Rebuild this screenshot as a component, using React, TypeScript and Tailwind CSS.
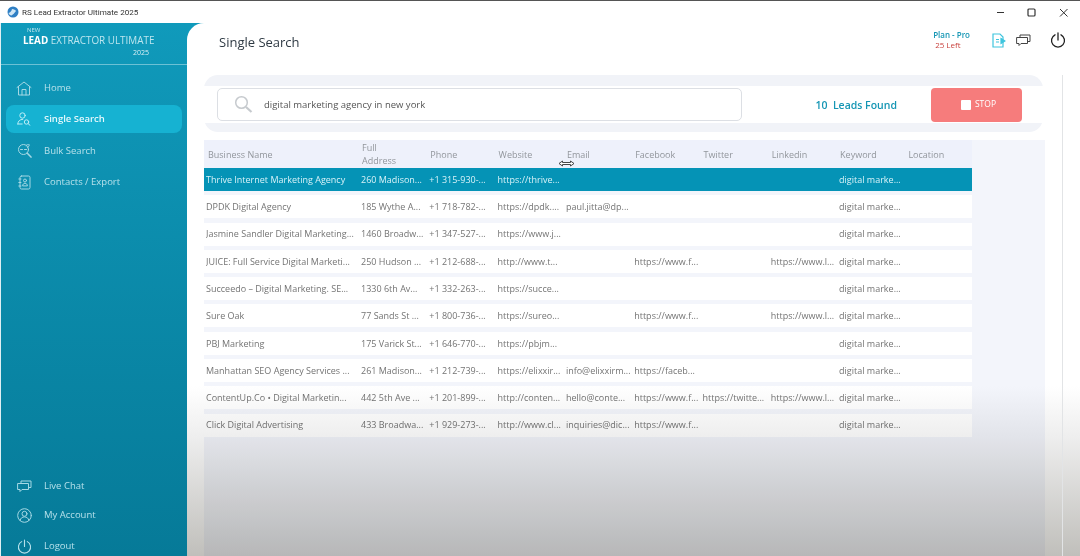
import React from "react";

const font = { fontFamily: '"Open Sans", "Noto Sans", sans-serif' };

const rows: string[][] = [
  ["Thrive Internet Marketing Agency", "260 Madison...", "+1 315-930-...", "https://thrive...", "", "", "", "", "digital marke..."],
  ["DPDK Digital Agency", "185 Wythe A...", "+1 718-782-...", "https://dpdk....", "paul.jitta@dp...", "", "", "", "digital marke..."],
  ["Jasmine Sandler Digital Marketing...", "1460 Broadw...", "+1 347-527-...", "https://www.j...", "", "", "", "", "digital marke..."],
  ["JUICE: Full Service Digital Marketi...", "250 Hudson ...", "+1 212-688-...", "http://www.t...", "", "https://www.f...", "", "https://www.l...", "digital marke..."],
  ["Succeedo – Digital Marketing. SE...", "1330 6th Av...", "+1 332-263-...", "https://succe...", "", "", "", "", "digital marke..."],
  ["Sure Oak", "77 Sands St ...", "+1 800-736-...", "https://sureo...", "", "https://www.f...", "", "https://www.l...", "digital marke..."],
  ["PBJ Marketing", "175 Varick St...", "+1 646-770-...", "https://pbjm...", "", "", "", "", "digital marke..."],
  ["Manhattan SEO Agency Services ...", "261 Madison...", "+1 212-739-...", "https://elixxir...", "info@elixxirm...", "https://faceb...", "", "", "digital marke..."],
  ["ContentUp.Co • Digital Marketin...", "442 5th Ave ...", "+1 201-899-...", "http://conten...", "hello@conte...", "https://www.f...", "https://twitte...", "https://www.l...", "digital marke..."],
  ["Click Digital Advertising", "433 Broadwa...", "+1 929-273-...", "http://www.cl...", "inquiries@dic...", "https://www.f...", "", "", "digital marke..."],
];

const headers = ["Business Name", "Full Address", "Phone", "Website", "Email", "Facebook", "Twitter", "Linkedin", "Keyword", "Location"];

function NavItem({ icon, label, active, className = "" }: { icon: React.ReactNode; label: string; active?: boolean; className?: string }) {
  return (
    <div className={`mx-[5px] flex h-[28px] shrink-0 items-center gap-[12px] rounded-[8px] pl-[10px] text-[9.5px] ${active ? "bg-[#16b2d2] font-semibold text-[#e4f8fc]" : "text-[#b5e0ea]"} ${className}`}>
      <span className="flex w-[16px] justify-center">{icon}</span>
      <span>{label}</span>
    </div>
  );
}

const ic = { fill: "none", stroke: "currentColor", strokeWidth: 1, strokeLinecap: "round" as const, strokeLinejoin: "round" as const };

const HomeIcon = () => (
  <svg width="16" height="15" viewBox="0 0 16 15" {...ic} className="text-[#a5d8e4]">
    <path d="M1 6.500 8 1l7 5.500" /><path d="M2.500 5.500V14h11V5.500" /><path d="M6 14V8.500h4V14" />
  </svg>
);
const UserSearchIcon = () => (
  <svg width="14" height="14" viewBox="0 0 14 14" {...ic} className="text-[#bdeef8]">
    <circle cx="5.500" cy="3.500" r="2.700" /><path d="M.8 12c0-2.800 2-4.700 5-4.700" /><path d="M.8 12h4.400" /><circle cx="9.500" cy="10" r="2.200" /><path d="m11.200 11.700 1.800 1.600" />
  </svg>
);
const BulkIcon = () => (
  <svg width="15" height="15" viewBox="0 0 15 15" {...ic} className="text-[#a5d8e4]">
    <circle cx="6.500" cy="6.500" r="5" /><path d="m10.300 10.300 3.700 3.800" strokeWidth="1.500" /><path d="M3.500 6.500h2M7.500 6.500h2" /><path d="M9 2.500c1-1 2.500-1 3.300-.8-.1 1-.5 2-1.800 2.800" />
  </svg>
);
const ContactsIcon = () => (
  <svg width="13" height="15" viewBox="0 0 13 15" {...ic} className="text-[#a5d8e4]">
    <rect x="2" y="1" width="10" height="13" rx="1.500" /><path d="M.8 4h2.200M.8 7.500h2.200M.8 11h2.200" /><circle cx="7" cy="5.500" r="1.500" /><path d="M4.600 10.500c0-3 4.800-3 4.800 0z" />
  </svg>
);
const ChatIcon = ({ className }: { className: string }) => (
  <svg width="15" height="13" viewBox="0 0 15 13" {...ic} className={className}>
    <path d="M4 3V1h10v6.500h-2" /><path d="M1 3.500h10.500v6H5l-2 2v-2H1z" />
  </svg>
);
const AccountIcon = () => (
  <svg width="15" height="15" viewBox="0 0 15 15" {...ic} className="text-[#a5d8e4]">
    <circle cx="7.500" cy="7.500" r="6.800" /><circle cx="7.500" cy="5.800" r="2.500" /><path d="M3 12.500c.6-2.600 2.400-3.600 4.500-3.600s3.900 1 4.500 3.600" />
  </svg>
);
const PowerIcon = ({ size, className, sw }: { size: number; className: string; sw: number }) => (
  <svg width={size} height={size} viewBox="0 0 16 16" fill="none" stroke="currentColor" strokeWidth={sw} strokeLinecap="round" className={className}>
    <path d="M5 2.800a6.500 6.500 0 1 0 6 0" /><path d="M8 1v7" />
  </svg>
);

export default function App() {
  return (
    <div style={font} className="flex h-[556px] w-[1080px] flex-col overflow-hidden border-t border-[#555] bg-white">
      <div className="flex h-[22px] shrink-0 items-center bg-white text-[#333]">
        <svg width="12" height="12" viewBox="0 0 12 12" className="ml-[7px]">
          <circle cx="6" cy="6" r="5.500" fill="#2f7fc4" />
          <path d="M1.500 7c2-.4 3-2 3.500-4 2 0 3.500 1 4 2-1.500 2-3 3.500-4.500 4.500C3 9.500 2 8.500 1.500 7z" fill="#cfe6f5" />
        </svg>
        <span className="ml-[3px] font-['Roboto'] text-[8.100px]">RS Lead Extractor Ultimate 2025</span>
        <div className="ml-auto flex items-center gap-[22px] pr-[11px] text-[#333]">
          <svg width="9" height="9" viewBox="0 0 9 9" stroke="currentColor" fill="none"><path d="M1 4.500h7" /></svg>
          <svg width="9" height="9" viewBox="0 0 9 9" stroke="currentColor" fill="none"><rect x="1" y="1" width="7" height="7" rx="1" strokeWidth="1.200" /></svg>
          <svg width="11" height="11" viewBox="0 0 11 11" stroke="currentColor" fill="none"><path d="m2 2 7.500 7.500M9.500 2 2 9.500" /></svg>
        </div>
      </div>

      <div className="flex min-h-0 flex-1">
        <aside className="flex w-[187px] shrink-0 flex-col overflow-hidden border-l border-[#dfeff3] bg-gradient-to-b from-[#109abb] to-[#067a98]">
          <div className="h-[42px] shrink-0 border-b border-[#6cc1d5] pl-[22px] text-[#d8eff5]">
            <div className="pl-[4px] pt-[4px] text-[6px] leading-[6px] text-[#bfe5ee]">NEW</div>
            <div className="text-[9.900px] leading-[14px] whitespace-nowrap text-[#bde6ef]">
              <span className="font-bold text-white">LEAD</span> EXTRACTOR ULTIMATE
            </div>
            <div className="pl-[110px] pt-[1px] text-[7px] leading-[9px]">2025</div>
          </div>
          <div className="flex flex-col gap-[3.400px] pt-[9px]">
            <NavItem icon={<HomeIcon />} label="Home" />
            <NavItem icon={<UserSearchIcon />} label="Single Search" active />
            <NavItem icon={<BulkIcon />} label="Bulk Search" />
            <NavItem icon={<ContactsIcon />} label="Contacts / Export" />
          </div>
          <div className="mb-[-4px] mt-auto flex flex-col gap-[1px]">
            <NavItem icon={<ChatIcon className="text-[#a5d8e4]" />} label="Live Chat" />
            <NavItem icon={<AccountIcon />} label="My Account" />
            <NavItem icon={<PowerIcon size={15} sw={1.200} className="text-[#b5e0ea]" />} label="Logout" className="mt-[2px]" />
          </div>
        </aside>

        <div className="min-w-0 flex-1 bg-[#109abb]">
          <main className="relative flex h-full flex-col rounded-tl-[17px] bg-white pl-[17px]">
            <header className="flex h-[52px] shrink-0 items-center pb-[14px]">
              <h1 className="pl-[15px] pt-[1px] text-[13px] font-normal text-[#2f3a44]">Single Search</h1>
              <div className="ml-auto flex items-center pb-[4px] pr-[14px]">
                <div className="mr-[22px] text-[8px] leading-[10px] whitespace-nowrap">
                  <div className="font-semibold text-[#1596b4]">Plan - Pro</div>
                  <div className="pl-[2px] text-[#c9433f]">25 Left</div>
                </div>
                <svg width="14" height="15" viewBox="0 0 14 15" fill="none" stroke="#3fc5de" strokeWidth="1.200" className="mr-[10px]">
                  <path d="M1 1h7l3 3v10H1z" /><path d="M4 6.500h3M4 9h3" /><path d="m9 5.500 4 2.500-4 2.500z" fill="#3fc5de" />
                </svg>
                <ChatIcon className="mr-[19px] text-[#444]" />
                <PowerIcon size={16} sw={1.300} className="text-[#222]" />
              </div>
            </header>

            <div className="mr-[37px] flex h-[57px] shrink-0 flex-col justify-start rounded-[14px] bg-[#f1f3f8] pt-[11px]">
              <div className="flex h-[37px] items-center bg-white pl-[13px] pr-[21px]">
                <div className="flex h-[33px] w-[525px] items-center rounded-[5px] border border-[#dcdfe4] bg-white pl-[16px] text-[9.500px] text-[#555]">
                  <svg width="19" height="19" viewBox="0 0 19 19" fill="none" stroke="#c6cace" strokeWidth="1.500" className="mr-[11px]">
                    <circle cx="7.500" cy="7.500" r="5.800" /><path d="m12 12 5.500 5" strokeWidth="2.200" />
                  </svg>
                  <span className="pt-[1px]">digital marketing agency in new york</span>
                </div>
                <div className="ml-auto mr-[34px] whitespace-nowrap pt-[2px] text-[10.500px] font-semibold text-[#1596b4]">10 &nbsp;Leads Found</div>
                <div className="flex h-[34px] w-[91px] items-center justify-center gap-[4px] rounded-[4px] bg-[#f67c7c] pl-[4px] text-[8.500px] text-white">
                  <span className="h-[10px] w-[10px] rounded-[1px] bg-white" />
                  STOP
                </div>
              </div>
            </div>

            <div className="mr-[35px] mt-[8px] min-h-0 flex-1 bg-[#f3f5fb]">
              <div className="w-[768px] text-[9px] text-[#747474]">
                <div className="grid h-[28px] grid-cols-[154px_repeat(9,68.300px)] items-center bg-[#eef1fb] pl-[4px] text-[#92969c]">
                  {headers.map((h) => (
                    <div key={h} className={h === "Full Address" ? "w-[40px] leading-[13px]" : "pt-[2px]"}>{h}</div>
                  ))}
                </div>
                <div className="flex flex-col gap-[4.300px]">
                  {rows.map((r, i) => (
                    <div
                      key={r[0]}
                      className={`grid h-[23px] grid-cols-[155px_repeat(9,68.300px)] items-center whitespace-nowrap pl-[2px] ${i === 0 ? "bg-[#0593b6] text-[#d8f2f8]" : "bg-white"}`}
                    >
                      {r.map((c, j) => (
                        <div key={j} className="overflow-hidden">{c}</div>
                      ))}
                    </div>
                  ))}
                </div>
              </div>
            </div>

            <div className="pointer-events-none absolute inset-x-0 bottom-0 h-[170px] bg-gradient-to-b from-white via-[#eeeeee] via-30% to-[#c0bfbb] mix-blend-multiply" />
            <div className="absolute bottom-0 right-[17px] top-[52px] w-px bg-[#e2e4e6]" />
            <svg width="17" height="7" viewBox="0 0 17 7" fill="#fff" stroke="#333" strokeWidth="0.900" className="absolute left-[371px] top-[137px]">
              <path d="M1 3.500 4.500 1v1.500h8V1L16 3.500 12.500 6V4.500h-8V6z" />
            </svg>
          </main>
        </div>
      </div>
    </div>
  );
}
